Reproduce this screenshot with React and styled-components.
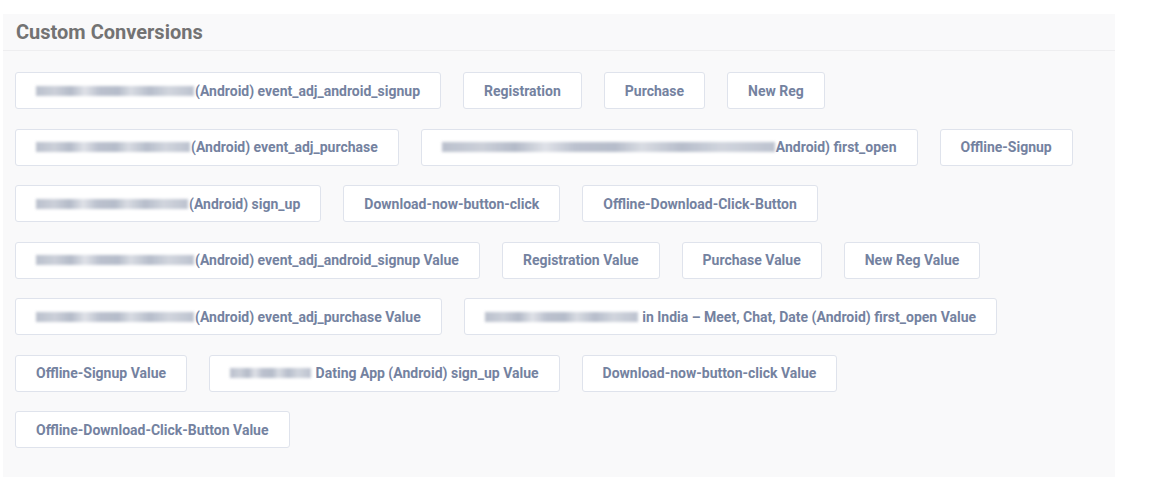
import React from 'react';
import styled, { createGlobalStyle } from 'styled-components';

const GlobalStyle = createGlobalStyle`
  body {
    margin: 0;
    background: #ffffff;
    font-family: Roboto, "Liberation Sans", sans-serif;
  }
`;

const Panel = styled.section`
  margin: 14px 0 0 3px;
  width: 1112px;
  min-height: 463px;
  background: #f9f9fa;
`;

const Header = styled.h3`
  margin: 0;
  height: 35px;
  padding: 0 0 1px 13px;
  display: flex;
  align-items: center;
  font-size: 20px;
  font-weight: 700;
  color: #737373;
  border-bottom: 1px solid #eeeef0;
`;

const List = styled.div`
  display: flex;
  flex-direction: column;
  gap: 19.5px;
  padding: 21px 12px 24px;
`;

const Row = styled.div`
  display: flex;
  gap: 22px;
`;

const Chip = styled.button`
  height: 37px;
  padding: 0 20px;
  display: inline-flex;
  align-items: center;
  background: #ffffff;
  border: 1px solid #dfe3ec;
  border-radius: 3px;
  font-family: Roboto, "Liberation Sans", sans-serif;
  font-size: 14px;
  font-weight: 700;
  color: #7482a0;
  white-space: nowrap;
`;

// pixelated/blurred name that was redacted in the source
const Redacted = styled.span`
  display: inline-block;
  width: ${p => p.w}px;
  height: 10px;
  margin-right: 1px;
  background: linear-gradient(
    90deg,
    #aeb5c4 0%,
    #c3c8d3 12%,
    #a7afbf 22%,
    #dadde4 31%,
    #b0b7c6 40%,
    #a9b1c1 52%,
    #d2d6de 60%,
    #aab2c2 72%,
    #c9ced8 84%,
    #b1b8c7 100%
  );
  filter: blur(1.4px);
  opacity: 0.85;
`;

const rows = [
  [
    { blur: 158, text: '(Android) event_adj_android_signup' },
    { text: 'Registration' },
    { text: 'Purchase' },
    { text: 'New Reg' },
  ],
  [
    { blur: 154, text: '(Android) event_adj_purchase' },
    { blur: 333, text: 'Android) first_open' },
    { text: 'Offline-Signup' },
  ],
  [
    { blur: 152, text: '(Android) sign_up' },
    { text: 'Download-now-button-click' },
    { text: 'Offline-Download-Click-Button' },
  ],
  [
    { blur: 158, text: '(Android) event_adj_android_signup Value' },
    { text: 'Registration Value' },
    { text: 'Purchase Value' },
    { text: 'New Reg Value' },
  ],
  [
    { blur: 158, text: '(Android) event_adj_purchase Value' },
    { blur: 153, text: 'in India – Meet, Chat, Date (Android) first_open Value' },
  ],
  [
    { text: 'Offline-Signup Value' },
    { blur: 81, text: 'Dating App (Android) sign_up Value' },
    { text: 'Download-now-button-click Value' },
  ],
  [{ text: 'Offline-Download-Click-Button Value' }],
];

export default function App() {
  return (
    <>
      <GlobalStyle />
      <Panel>
        <Header>Custom Conversions</Header>
        <List>
          {rows.map((row, i) => (
            <Row key={i}>
              {row.map((c, j) => (
                <Chip key={j}>
                  {c.blur && <Redacted w={c.blur} />}
                  {c.blur && c.text[0] !== '(' && c.text[0] !== 'A' ? '\u00a0' : ''}
                  {c.text}
                </Chip>
              ))}
            </Row>
          ))}
        </List>
      </Panel>
    </>
  );
}
